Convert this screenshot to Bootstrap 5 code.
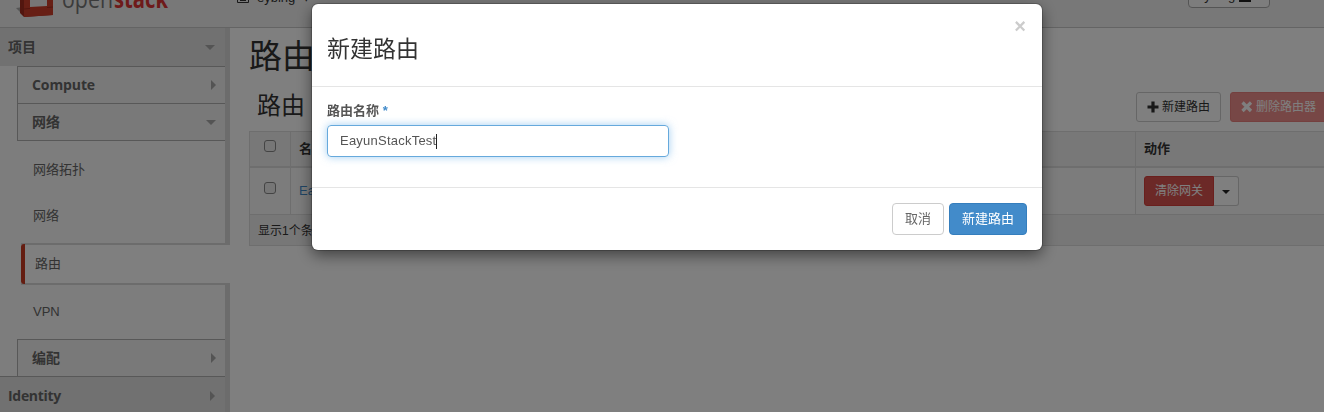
<!DOCTYPE html>
<html lang="zh-CN">
<head>
<meta charset="utf-8">
<meta name="viewport" content="width=device-width, initial-scale=1">
<title>路由 - OpenStack Dashboard</title>
<link rel="stylesheet" href="https://cdn.jsdelivr.net/npm/bootstrap@5.3.0/dist/css/bootstrap.min.css">
<style>
body{font-family:"Liberation Sans","Noto Sans CJK SC",sans-serif;font-size:13px;line-height:18px;color:#333;overflow:hidden;height:412px;background:#fff}
.page{width:1340px;height:412px;overflow:hidden}
.topbar{height:28px;background:#f1f1f1;border-bottom:1px solid #c8c8c8;overflow:hidden}
.logo{width:237px;height:27px;flex:none}
.logo text{font-family:"Open Sans",sans-serif;font-size:25px}
.project{margin-top:-11px;gap:8px}
.userbtn{margin-left:auto;margin-right:70px;width:82px;height:30px;margin-top:-22px;border:1px solid #aaa;border-radius:4px;background:#fafafa;padding-top:8px;white-space:nowrap}
.side{width:230px;flex:none;background:#fafafa;border-right:5px solid #d9d9d9;height:384px;font-family:"Open Sans","Noto Sans CJK SC",sans-serif}
.h-top{height:38px;background:#e3e3e3;padding:0 10px 0 8px;font-weight:700;font-size:14px;color:#666}
.h-top.next{border-top:1px solid #b0b0b0}
.latin{letter-spacing:-.3px}
.h-sub.latin{letter-spacing:-.1px}
.h-sub{height:37px;margin-left:17px;border:solid #b0b0b0;border-width:1px 0 0 1px;background:#f3f3f3;padding:0 9px 0 14px;font-weight:700;font-size:14px;color:#666}
.h-sub.open{height:38px;border-bottom-width:1px}
.h-sub.after{margin-top:8px}
.entry{font-family:"Liberation Sans","Noto Sans CJK SC",sans-serif;color:#666;padding-left:33px;height:46px}
.entry.current{height:42px;margin:6px -5px 0 21px;padding-left:14px;border:solid #d8d8d8;border-width:2px 0;background:#fff;position:relative}
.entry.current::before{content:"";position:absolute;left:0;top:-1px;bottom:-1px;width:4px;border-radius:3px 0 0 3px;background:#c93a22}
.tri-r{border:5px solid transparent;border-left-color:#a8a8a8;border-right:0}
.tri-d{border:5px solid transparent;border-top-color:#a8a8a8;border-bottom:0}
.main{width:1100px;padding-left:19px;flex:none}
.title{font-size:33px;line-height:40px;margin:8px 0 0;padding-top:1px;font-weight:400;height:40px}
.sub-title{font-size:24px;line-height:28px;font-weight:400;padding-left:8px;margin:0}
.tools{height:30px;margin-top:16px}
.b-sm{height:30px;font-size:12px;line-height:18px;padding:5px 10px;border-radius:3px;white-space:nowrap}
.b-sm svg{vertical-align:-2px;margin-right:3px}
.b-line{border:1px solid #ccc;background:#fff;color:#333}
.b-line.b-sm{width:85px;margin-right:9px}
.b-del{background:#ef8f8c;border:1px solid #e8817e;color:#fff;width:100px}
.grid-table{margin:9px 0 0;width:1100px;border:1px solid #ddd}
.gr{display:grid;grid-template-columns:40px 845px 1fr}
.gr>div{border-left:1px solid #ddd;padding-left:8px}
.gr>div:first-child{border-left:0;padding-left:14px}
.gr.hd{height:36px;background:#f1f1f1;border-bottom:2px solid #ddd;font-weight:700}
.gr.bd{height:47px;background:#f9f9f9;border-bottom:1px solid #ddd}
.gr a{color:#428bca}
.ft{height:30px;background:#efefef;padding:2px 0 0 8px;font-size:12px}
.cb{width:12px;height:12px;border:1px solid #888;border-radius:3px;background:#ededed;margin-bottom:6px}
.b-clear{background:#d9534f;border:1px solid #d43f3a;color:#fff;border-radius:3px 0 0 3px;width:70px}
.b-drop{width:25px;height:30px;border:1px solid #ccc;border-left:0;border-radius:0 3px 3px 0;background:#fff}
.b-drop i{border:4px solid transparent;border-top-color:#222;border-bottom:0;margin-top:2px}
.modal-dialog{width:730px;max-width:730px;margin:4px 0 0 312px}
.modal-content{border:0;border-radius:6px;box-shadow:0 5px 15px rgba(0,0,0,.5),0 0 0 1px rgba(0,0,0,.2);height:246px;color:#333}
.modal-header{height:83px;border-bottom:1px solid #e5e5e5;padding:14px 16px 15px 15px;border-radius:0}
.modal-title{font-size:23px;font-weight:400;line-height:30px}
.x-close{font-size:20px;font-weight:700;line-height:16px;color:#ccc}
.modal-body{padding:15px}
.lab{font-weight:700;color:#555;line-height:18px;margin-bottom:5px}
.lab span{color:#428bca}
.inp{width:342px;height:32px;border:1px solid #66a9dc;border-radius:4px;box-shadow:0 0 8px rgba(102,175,233,.6);padding:0 12px;color:#555;letter-spacing:.23px}
.caret{width:1px;height:15px;background:#222}
.modal-footer{height:63px;padding:15px;border-top:1px solid #e5e5e5;gap:5px;align-items:flex-start}
.modal-footer>*{margin:0}
.b-md{height:32px;font-size:13px;line-height:18px;padding:6px 12px;border-radius:4px}
.b-md.b-line{color:#666}
.b-blue{background:#428bca;border:1px solid #357ebd;color:#fff}
</style>
</head>
<body class="modal-open">
<div class="page">
  <header class="topbar d-flex">
    <svg class="logo" viewBox="0 0 237 27"><path d="M16 8l7-1v8z" fill="#aaa"/><path d="M20 0h33v15l-29 2-4-4z" fill="#a52c1e"/><path d="M24 0h29v15l-29 2z" fill="#cf3f2a"/><path d="M30 0h17v6l-17 1z" fill="#eee"/><path d="M24 9l6-.5M47 7.500l6-.5" stroke="#a52c1e"/><text x="62" y="8" fill="#777" textLength="51" lengthAdjust="spacingAndGlyphs">open</text><text x="114" y="8" fill="#dd3535" font-weight="700" textLength="54" lengthAdjust="spacingAndGlyphs">stack</text></svg>
    <div class="project d-flex"><svg width="12" height="14" viewBox="0 0 12 14"><path d="M.5 1.500h11v12H.5zM3 11.500h6M3 9h6" fill="none" stroke="#333"/></svg><span>eybing</span><span>▾</span></div>
    <div class="userbtn px-2">eybing <svg width="12" height="14"><path d="M0 10h12v2H0z" fill="#222"/></svg></div>
  </header>
  <div class="d-flex">
    <nav class="side">
      <div class="h-top d-flex align-items-center justify-content-between">项目<i class="tri-d"></i></div>
      <div class="h-sub latin d-flex align-items-center justify-content-between">Compute<i class="tri-r"></i></div>
      <div class="h-sub open d-flex align-items-center justify-content-between">网络<i class="tri-d"></i></div>
      <div class="entry d-flex align-items-center mt-1 pt-1">网络拓扑</div>
      <div class="entry d-flex align-items-center pt-1">网络</div>
      <div class="entry current d-flex align-items-center">路由</div>
      <div class="entry d-flex align-items-center pt-2">VPN</div>
      <div class="h-sub after d-flex align-items-center justify-content-between">编配<i class="tri-r"></i></div>
      <div class="h-top next latin d-flex align-items-center justify-content-between">Identity<i class="tri-r"></i></div>
    </nav>
    <main class="main">
      <h1 class="title">路由</h1>
      <div class="d-flex tools">
        <h2 class="sub-title">路由</h2>
        <div class="d-flex ms-auto">
          <div class="b-sm b-line"><svg width="12" height="12"><path d="M6 .5v11M.5 6h11" stroke="#333" stroke-width="3.200"/></svg>新建路由</div>
          <div class="b-sm b-del"><svg width="12" height="12"><path d="M1.500 1.500l8.500 8.500M10 1.500l-8.500 8.500" stroke="#fff" stroke-width="3.200"/></svg>删除路由器</div>
        </div>
      </div>
      <div class="grid-table">
        <div class="gr hd"><div class="d-flex align-items-center"><i class="cb"></i></div><div class="d-flex align-items-center">名称</div><div class="d-flex align-items-center">动作</div></div>
        <div class="gr bd"><div class="d-flex align-items-center"><i class="cb"></i></div><div class="d-flex align-items-center"><a class="text-decoration-none">EayunStack</a></div><div class="d-flex align-items-center"><span class="b-sm b-clear">清除网关</span><span class="b-drop d-flex align-items-center justify-content-center"><i></i></span></div></div>
        <div class="ft d-flex align-items-center">显示1个条目</div>
      </div>
    </main>
  </div>
</div>
<div class="modal-backdrop show"></div>
<div class="modal show d-block" tabindex="-1">
  <div class="modal-dialog">
    <div class="modal-content">
      <div class="modal-header d-flex align-items-start justify-content-between"><h3 class="modal-title mt-3 mb-0">新建路由</h3><span class="x-close">×</span></div>
      <div class="modal-body">
        <div class="lab">路由名称 <span>*</span></div>
        <div class="inp d-flex align-items-center">EayunStackTest<i class="caret"></i></div>
      </div>
      <div class="modal-footer"><span class="b-md b-line">取消</span><span class="b-md b-blue">新建路由</span></div>
    </div>
  </div>
</div>
<script src="https://cdn.jsdelivr.net/npm/bootstrap@5.3.0/dist/js/bootstrap.bundle.min.js"></script>
</body>
</html>
